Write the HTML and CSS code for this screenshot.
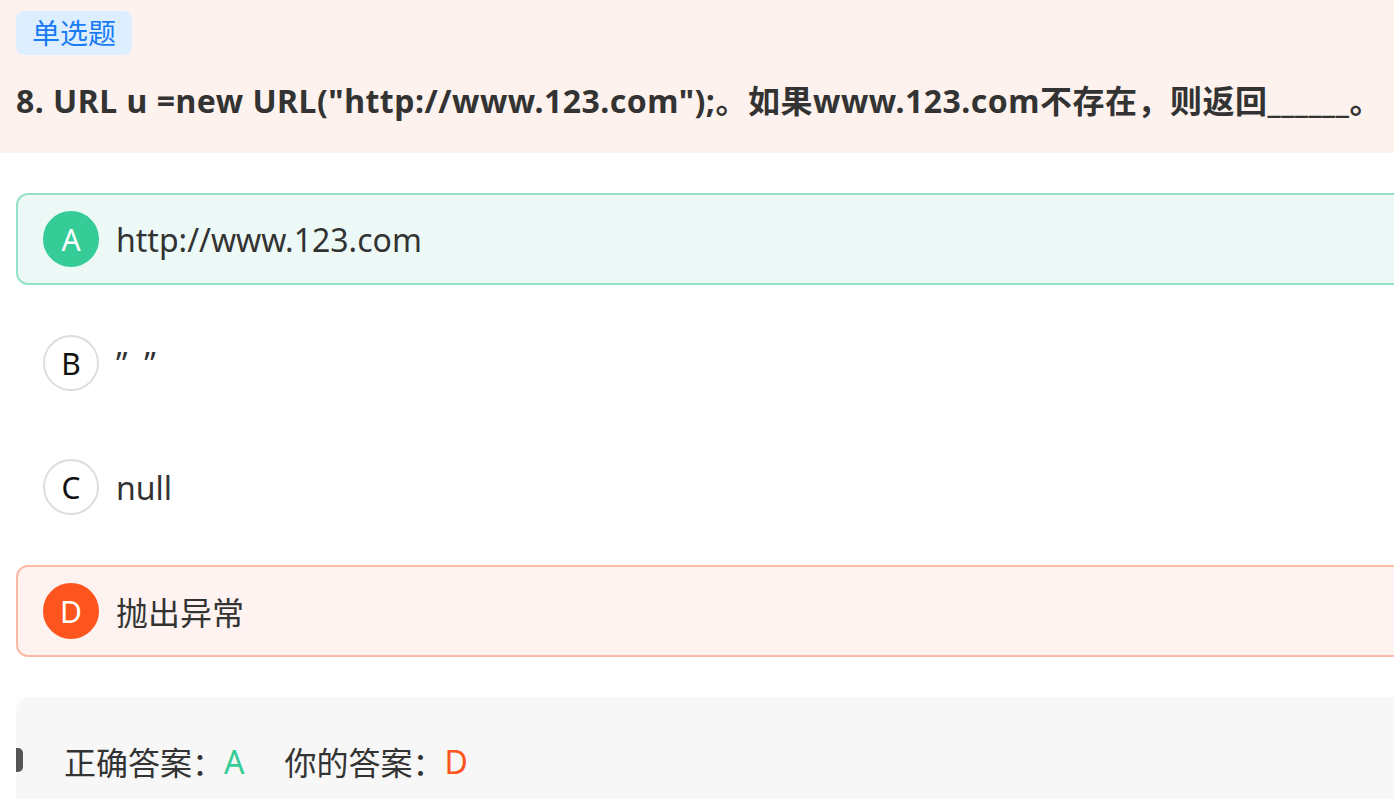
FILE: index.html
```html
<!DOCTYPE html>
<html lang="zh">
<head>
<meta charset="utf-8">
<link rel="stylesheet" href="styles.css">
</head>
<body>
<div class="page">
  <header class="head">
    <span class="tag">单选题</span>
    <h1 class="title">8. URL u =new URL("http://www.123.com");。如果www.123.com不存在，则返回______。</h1>
  </header>
  <div class="options">
    <div class="opt right"><span class="dot">A</span><span class="txt">http://www.123.com</span></div>
    <div class="opt"><span class="dot">B</span><span class="txt">”&nbsp;&nbsp;”</span></div>
    <div class="opt"><span class="dot">C</span><span class="txt">null</span></div>
    <div class="opt wrong"><span class="dot">D</span><span class="txt">抛出异常</span></div>
  </div>
  <div class="answer">
    <span class="pill"></span>
    <span class="lbl">正确答案：</span><span class="ok">A</span>
    <span class="lbl mine">你的答案：</span><span class="bad">D</span>
  </div>
</div>
</body>
</html>
```

FILE: styles.css
```css
html, body { margin: 0; padding: 0; overflow: hidden; background: #fff; }
body { font-family: "Noto Sans", "Noto Sans CJK SC", sans-serif; color: #333; }
.page { width: 1440px; }
.head { background: #fef2ee; padding: 11px 16px 22px; }
.tag { display: block; width: max-content; background: #ddefff; color: #1a7cf5; font-size: 28px; line-height: 44px; padding: 0 16px; border-radius: 8px; }
.title { margin: 16px 0 0; font-size: 32px; font-weight: 700; line-height: 60px; color: #333; white-space: nowrap; letter-spacing: 0.5px; }
.options { padding: 40px 0 0 16px; display: flex; flex-direction: column; gap: 32px; }
.opt { display: flex; align-items: center; height: 92px; box-sizing: border-box; padding-left: 25px; border: 2px solid transparent; border-radius: 12px; }
.opt.right { background: #ecf9f6; border-color: #96e1ca; }
.opt.wrong { background: #fef3f1; border-color: #fbbba6; }
.dot { width: 56px; height: 56px; box-sizing: border-box; border: 2px solid #ddd; border-radius: 50%; display: flex; align-items: center; justify-content: center; font-size: 30px; color: #111; }
.right .dot { background: #36cc98; border-color: #36cc98; color: #fff; }
.wrong .dot { background: #fe541e; border-color: #fe541e; color: #fff; }
.txt { margin-left: 17px; font-size: 32px; color: #333; }
.answer { position: relative; margin: 40px 0 0 16px; background: #f7f7f7; border-radius: 14px 0 0 0; height: 110px; display: flex; align-items: center; padding: 18px 0 0 48px; font-size: 32px; box-sizing: border-box; }
.pill { position: absolute; left: 0; top: 51px; width: 7px; height: 24px; background: #555; border-radius: 0 5px 5px 0; }
.lbl { color: #333; }
.mine { margin-left: 40px; }
.ok { color: #36cc98; }
.bad { color: #fe541e; }
```
